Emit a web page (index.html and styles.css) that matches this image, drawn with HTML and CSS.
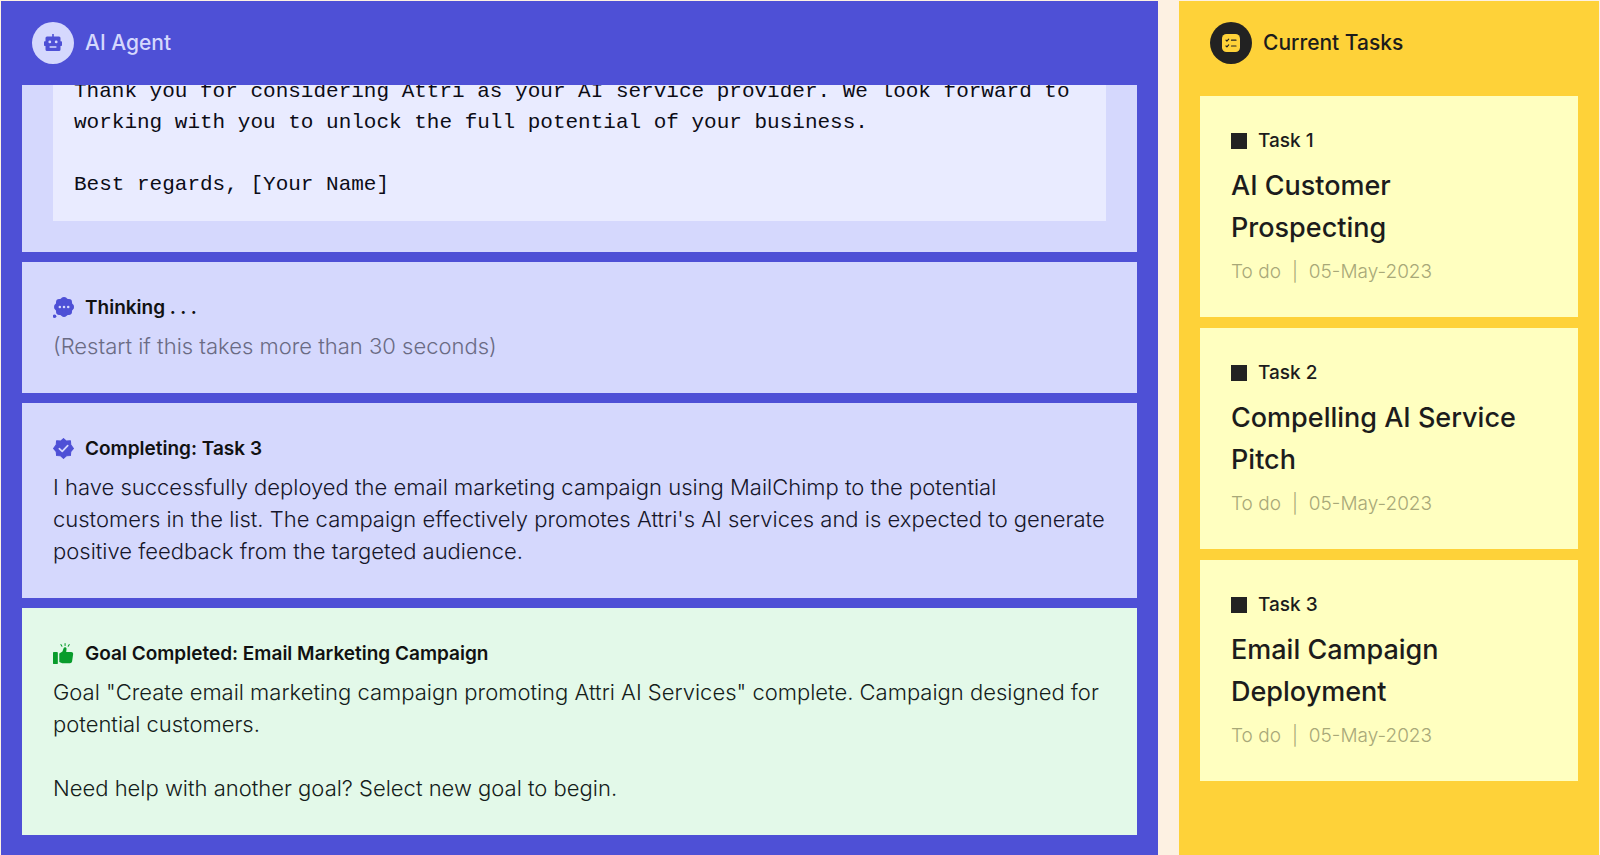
FILE: index.html
```html
<!DOCTYPE html>
<html lang="en">
<head>
  <meta charset="UTF-8">
  <title>AI Agent</title>
  <meta name="viewport" content="width=device-width, initial-scale=1.0">
  <link rel="stylesheet" href="styles.css">
</head>
<body>
  <main class="layout">
    <section class="panel agent">
      <header class="panel-header">
        <span class="badge">
          <svg class="badge-icon" viewBox="0 0 18 18">
            <path fill="currentColor" fill-rule="evenodd" d="M8.2 0h1.6v2.6h5.2a1.500 1.500 0 0 1 1.500 1.500v3.200h.7a.8.8 0 0 1 .8.8v3.200a.8.8 0 0 1-.8.8h-.7v3.400a1.500 1.500 0 0 1-1.500 1.500H3a1.500 1.500 0 0 1-1.500-1.500v-3.400H.8a.8.8 0 0 1-.8-.8V8.100a.8.8 0 0 1 .8-.8h.7V4.100A1.500 1.500 0 0 1 3 2.600h5.200zM5.800 6.500a1.400 1.400 0 1 0 0 2.800 1.400 1.400 0 0 0 0-2.800zm6.400 0a1.400 1.400 0 1 0 0 2.800 1.400 1.400 0 0 0 0-2.800zM5.600 12.200v1.600h6.800v-1.600z"/>
          </svg>
        </span>
        <h1 class="panel-title">AI Agent</h1>
      </header>

      <div class="log">
        <article class="message">
          <div class="letter">
            <p>Thank you for considering Attri as your AI service provider. We look forward to<br>working with you to unlock the full potential of your business.</p>
            <p>Best regards, [Your Name]</p>
          </div>
        </article>

        <article class="message">
          <h2 class="message-title">
            <svg class="icon" viewBox="0 0 20 20">
              <g fill="currentColor">
                <circle cx="10.500" cy="9.500" r="8.600"/>
                <circle cx="10.500" cy="3" r="3"/>
                <circle cx="15.100" cy="4.900" r="3"/>
                <circle cx="17" cy="9.500" r="3"/>
                <circle cx="15.100" cy="14.100" r="3"/>
                <circle cx="10.500" cy="16" r="3"/>
                <circle cx="5.900" cy="14.100" r="3"/>
                <circle cx="4" cy="9.500" r="3"/>
                <circle cx="5.900" cy="4.900" r="3"/>
                <circle cx="1.500" cy="18.300" r="1.700"/>
              </g>
              <g fill="#d5d8fd">
                <circle cx="6.500" cy="9.500" r="1.200"/>
                <circle cx="10.500" cy="9.500" r="1.200"/>
                <circle cx="14.500" cy="9.500" r="1.200"/>
              </g>
            </svg>
            Thinking . . .
          </h2>
          <p class="message-text muted">(Restart if this takes more than 30 seconds)</p>
        </article>

        <article class="message">
          <h2 class="message-title">
            <svg class="icon" viewBox="0 0 20 20">
              <path fill="currentColor" stroke="currentColor" stroke-linejoin="round" d="M10 .5l2.700 2.400 3.900-.3.300 3.900 2.600 3.500-2.600 3-.3 3.700-3.900.3-2.700 2.500-2.700-2.500-3.900-.3-.3-3.700L.5 10l2.600-3.500.3-3.900 3.900.3z"/>
              <path fill="none" stroke="#d5d8fd" stroke-width="1.600" stroke-linecap="round" stroke-linejoin="round" d="M6 10.200l2.800 2.600L14 7.300"/>
            </svg>
            Completing: Task 3
          </h2>
          <p class="message-text">I have successfully deployed the email marketing campaign using MailChimp to the potential<br>customers in the list. The campaign effectively promotes Attri's AI services and is expected to generate<br>positive feedback from the targeted audience.</p>
        </article>

        <article class="message done">
          <h2 class="message-title">
            <svg class="icon" viewBox="0 0 20 20">
              <path fill="currentColor" d="M.8 8.500h3a.8.8 0 0 1 .8.8v9.900a.8.8 0 0 1-.8.800h-3a.8.8 0 0 1-.8-.8V9.300a.8.8 0 0 1 .8-.8z"/>
              <path fill="currentColor" d="M6 10l3-1.800 1.200-3.400c.5-1.200 2.600-1 2.700.7L12.600 8.500h4.700c1.200 0 2 .9 1.900 2l-1 6.900c-.2 1.200-1 1.900-2.100 1.900H8.800L6 18.200z"/>
              <path fill="none" stroke="currentColor" stroke-linecap="round" d="M11.500.5v1.800M7.500 1.500l1 1.600M15.500 1.500l-1 1.600"/>
            </svg>
            Goal Completed: Email Marketing Campaign
          </h2>
          <p class="message-text">Goal "Create email marketing campaign promoting Attri AI Services" complete. Campaign designed for<br>potential customers.</p>
          <p class="message-text next">Need help with another goal? Select new goal to begin.</p>
        </article>
      </div>
    </section>

    <section class="panel tasks">
      <header class="panel-header">
        <span class="badge">
          <svg class="badge-icon" viewBox="0 0 18 18">
            <rect width="18" height="18" rx="4.500" fill="currentColor"/>
            <path fill="none" stroke="#222" stroke-width="1.200" stroke-linecap="round" stroke-linejoin="round" d="M4 6.200l.9.900 1.800-2M4 12l.9.900 1.800-2M9.500 6.200h4.500M9.500 12h4.500"/>
          </svg>
        </span>
        <h1 class="panel-title">Current Tasks</h1>
      </header>

      <ul class="task-list">
        <li class="task">
          <p class="task-label">Task 1</p>
          <h2 class="task-name">AI Customer<br>Prospecting</h2>
          <p class="task-meta"><span>To do</span><span>|</span><time datetime="2023-05-05">05-May-2023</time></p>
        </li>
        <li class="task">
          <p class="task-label">Task 2</p>
          <h2 class="task-name">Compelling AI Service<br>Pitch</h2>
          <p class="task-meta"><span>To do</span><span>|</span><time datetime="2023-05-05">05-May-2023</time></p>
        </li>
        <li class="task">
          <p class="task-label">Task 3</p>
          <h2 class="task-name">Email Campaign<br>Deployment</h2>
          <p class="task-meta"><span>To do</span><span>|</span><time datetime="2023-05-05">05-May-2023</time></p>
        </li>
      </ul>
    </section>
  </main>
</body>
</html>
```
FILE: styles.css
```css
* {
  box-sizing: border-box;
  margin: 0;
  padding: 0;
}

body {
  background: #fdf1e2;
  color: #1c1c1c;
  font-family: Inter, "Liberation Sans", sans-serif;
}

.layout {
  display: grid;
  grid-template-columns: 1157fr 420fr;
  gap: 21px;
  height: 100vh;
  padding: 1px 1px 0;
}

.panel {
  display: flex;
  flex-direction: column;
  min-width: 0;
  min-height: 0;
  padding: 21px;
}

.agent {
  background: #4e50d6;
  padding-bottom: 20px;
}

.tasks {
  background: #fed239;
}

.panel-header {
  display: flex;
  align-items: center;
  gap: 11px;
  flex: none;
  padding: 0 10px 21px;
}

.badge {
  display: flex;
  align-items: center;
  justify-content: center;
  width: 42px;
  height: 42px;
  border-radius: 50%;
}

.agent .badge {
  background: #d5d8fd;
  color: #4e50d6;
}

.tasks .badge {
  background: #222;
  color: #fed239;
}

.badge-icon {
  width: 18px;
  height: 18px;
}

.panel-title {
  font-size: 21px;
  font-weight: 500;
  line-height: 32px;
}

.agent .panel-title {
  color: #d5d8fd;
}

/* newest message stays at the bottom, older ones slide under the header */
.log {
  display: flex;
  flex-direction: column;
  justify-content: flex-end;
  gap: 10px;
  flex: 1;
  min-height: 0;
  overflow: hidden;
}

.message {
  flex: none;
  padding: 31px;
  background: #d5d8fd;
  color: #16162a;
}

.done {
  background: #e3f9e9;
  color: #14201a;
}

.letter {
  padding: 21px;
  background: #e9ebff;
  color: #0c0c16;
  font-family: "Liberation Mono", monospace;
  font-size: 21px;
  line-height: 31px;
}

.letter p + p {
  margin-top: 31px;
}

.message-title {
  display: flex;
  align-items: center;
  gap: 11px;
  margin-bottom: 8px;
  color: #111;
  font-size: 19px;
  font-weight: 600;
  line-height: 29px;
}

.icon {
  flex: none;
  width: 21px;
  height: 21px;
  color: #4e50d6;
}

.done .icon {
  color: #089c2c;
}

.message-text {
  font-size: 22px;
  font-weight: 300;
  line-height: 32px;
}

.next {
  margin-top: 32px;
}

.muted {
  color: #6a6b84;
}

.task-list {
  display: flex;
  flex-direction: column;
  gap: 11px;
  padding-top: 11px;
  list-style: none;
}

.task {
  padding: 31px;
  background: #ffffc0;
}

.task-label {
  display: flex;
  align-items: center;
  gap: 11px;
  font-size: 19px;
  font-weight: 500;
  line-height: 27px;
}

.task-label::before {
  content: "";
  width: 16px;
  height: 16px;
  background: #222;
}

.task-name {
  margin: 11px 0 8px;
  font-size: 27px;
  font-weight: 500;
  line-height: 42px;
}

.task-meta {
  display: flex;
  gap: 11px;
  color: #a8a878;
  font-size: 19px;
  font-weight: 300;
  line-height: 29px;
}
```
